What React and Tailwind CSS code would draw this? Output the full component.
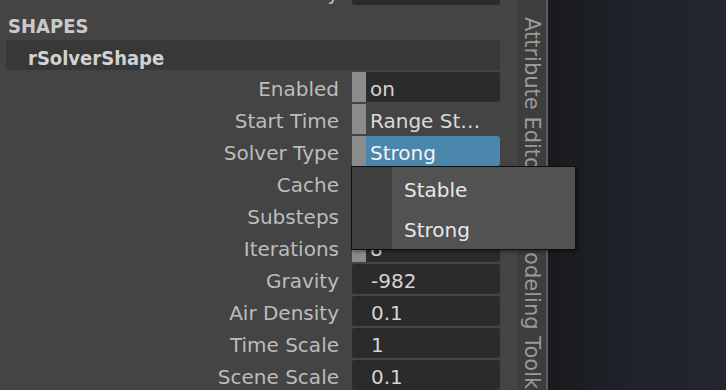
import React from 'react'

const LABEL = { fontFamily: '"DejaVu Sans", sans-serif' }
const BOLD = { fontFamily: '"DejaVu Sans Condensed", "DejaVu Sans", sans-serif' }

const rows = [
    { label: 'Enabled', value: 'on', bar: true, tone: 'dark' },
    { label: 'Start Time', value: 'Range St…', bar: true, tone: 'none' },
    { label: 'Solver Type', value: 'Strong', bar: true, tone: 'blue' },
    { label: 'Cache', value: 'Static', bar: true, tone: 'dark' },
    { label: 'Substeps', value: '4', bar: true, tone: 'dark' },
    { label: 'Iterations', value: '8', bar: true, tone: 'dark' },
    { label: 'Gravity', value: '-982' },
    { label: 'Air Density', value: '0.1' },
    { label: 'Time Scale', value: '1' },
    { label: 'Scene Scale', value: '0.1' },
]

const toneClass = {
    dark: 'bg-[#2b2b2b] text-[#d4d4d4]',
    none: 'text-[#dadada]',
    blue: 'bg-[#4b86ad] text-[#f4f4f4]',
}

const Field = ({ row }) => {
    if (row.bar) {
        return (
            <div className="flex w-[148px] h-[30px]">
                <div className="w-[14px] h-full bg-[#8b8b8b]" />
                <div className={`flex-1 h-full rounded-r-[3px] pl-[4px] leading-[34px] whitespace-nowrap overflow-hidden ${toneClass[row.tone]}`}>
                    {row.value}
                </div>
            </div>
        )
    }
    return (
        <div className="w-[148px] h-[30px] rounded-[3px] bg-[#2b2b2b] text-[#d4d4d4] pl-[19px] leading-[34px]">
            {row.value}
        </div>
    )
}

const Row = ({ row }) => (
    <div className="flex items-start h-[30px] mb-[2px] pr-[17px]">
        <div className="flex-1 text-right pr-[13px] text-[#bcbcbc] leading-[34px] whitespace-nowrap">{row.label}</div>
        <Field row={row} />
    </div>
)

export default function App() {
    return (
        <div className="relative flex w-[726px] h-[390px] overflow-hidden text-[20px] bg-[#444444]" style={LABEL}>
            {/* Attribute editor panel */}
            <div className="w-[517px] h-full bg-[#444444] overflow-hidden">
                <div className="mt-[-24px]">
                    <div className="flex items-start h-[30px] pr-[17px]">
                        <div className="flex-1 text-right pr-[13px] text-[#bcbcbc] leading-[34px]">Visibility</div>
                        <div className="w-[148px] h-[29px] rounded-[3px] bg-[#2b2b2b]" />
                    </div>
                    <div className="h-[34px] pt-[5px] pl-[8px] leading-[30px] font-bold text-[#c9c9c9]" style={BOLD}>SHAPES</div>
                    <div className="ml-[6px] mr-[17px] h-[30px] mb-[2px] bg-[#383838] pl-[22px] leading-[36px] font-bold text-[#d2d2d2]" style={BOLD}>
                        rSolverShape
                    </div>
                    {rows.map(r => <Row key={r.label} row={r} />)}
                </div>
            </div>

            {/* Vertical tab strip */}
            <div className="w-[29px] h-full bg-[#3d3d3d] overflow-hidden flex flex-col items-center pt-[17px] gap-[55px] text-[21px] text-[#9a9a9a]">
                <div className="[writing-mode:vertical-rl] leading-[29px] whitespace-nowrap">Attribute Editor</div>
                <div className="[writing-mode:vertical-rl] leading-[29px] whitespace-nowrap">Modeling Toolkit</div>
            </div>
            <div className="w-[2px] h-full bg-[#5e5e5e]" />

            {/* Viewport */}
            <div className="flex-1 h-full bg-gradient-to-r from-[#181a1f] via-[#20232a] to-[#23262d]" />

            {/* Dropdown menu */}
            <div className="absolute left-[351px] top-[166px] w-[225px] h-[84px] border border-[#0f0f0f] bg-[#525252] flex shadow-[2px_2px_3px_rgba(0,0,0,0.35)] overflow-hidden">
                <div className="w-[40px] h-full bg-[#3f3f3f]" />
                <div className="flex-1 pt-[3px] pl-[12px] text-[#e8e8e8]">
                    <div className="h-[40px] leading-[40px]">Stable</div>
                    <div className="h-[40px] leading-[40px]">Strong</div>
                </div>
            </div>
        </div>
    )
}
